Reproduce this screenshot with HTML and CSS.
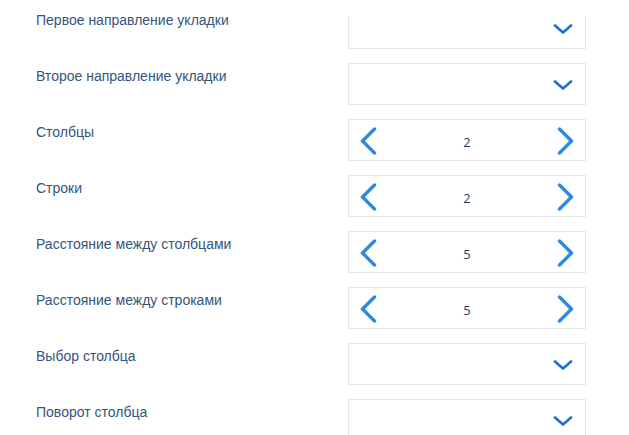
FILE: index.html
```html
<!DOCTYPE html>
<html lang="ru">
<head>
<meta charset="utf-8">
<link rel="stylesheet" href="styles.css">
</head>
<body>
<div class="form">
  <div class="row">
    <div class="label">Первое направление укладки</div>
    <div class="field select clipped">
      <svg class="chev" width="20" height="10" viewBox="0 0 20 10"><path d="M2 1.5 L10 8.5 L18 1.5"/></svg>
    </div>
  </div>
  <div class="row">
    <div class="label">Второе направление укладки</div>
    <div class="field select">
      <svg class="chev" width="20" height="10" viewBox="0 0 20 10"><path d="M2 1.5 L10 8.5 L18 1.5"/></svg>
    </div>
  </div>
  <div class="row">
    <div class="label">Столбцы</div>
    <div class="field stepper">
      <svg class="arrow" width="17" height="28" viewBox="0 0 17 28"><path d="M14.5 2 L2.5 14 L14.5 26"/></svg>
      <span class="value">2</span>
      <svg class="arrow" width="17" height="28" viewBox="0 0 17 28"><path d="M2.5 2 L14.5 14 L2.5 26"/></svg>
    </div>
  </div>
  <div class="row">
    <div class="label">Строки</div>
    <div class="field stepper">
      <svg class="arrow" width="17" height="28" viewBox="0 0 17 28"><path d="M14.5 2 L2.5 14 L14.5 26"/></svg>
      <span class="value">2</span>
      <svg class="arrow" width="17" height="28" viewBox="0 0 17 28"><path d="M2.5 2 L14.5 14 L2.5 26"/></svg>
    </div>
  </div>
  <div class="row">
    <div class="label">Расстояние между столбцами</div>
    <div class="field stepper">
      <svg class="arrow" width="17" height="28" viewBox="0 0 17 28"><path d="M14.5 2 L2.5 14 L14.5 26"/></svg>
      <span class="value">5</span>
      <svg class="arrow" width="17" height="28" viewBox="0 0 17 28"><path d="M2.5 2 L14.5 14 L2.5 26"/></svg>
    </div>
  </div>
  <div class="row">
    <div class="label">Расстояние между строками</div>
    <div class="field stepper">
      <svg class="arrow" width="17" height="28" viewBox="0 0 17 28"><path d="M14.5 2 L2.5 14 L14.5 26"/></svg>
      <span class="value">5</span>
      <svg class="arrow" width="17" height="28" viewBox="0 0 17 28"><path d="M2.5 2 L14.5 14 L2.5 26"/></svg>
    </div>
  </div>
  <div class="row">
    <div class="label">Выбор столбца</div>
    <div class="field select">
      <svg class="chev" width="20" height="10" viewBox="0 0 20 10"><path d="M2 1.5 L10 8.5 L18 1.5"/></svg>
    </div>
  </div>
  <div class="row">
    <div class="label">Поворот столбца</div>
    <div class="field select">
      <svg class="chev" width="20" height="10" viewBox="0 0 20 10"><path d="M2 1.5 L10 8.5 L18 1.5"/></svg>
    </div>
  </div>
</div>
</body>
</html>
```

FILE: styles.css
```css
html, body {
  margin: 0;
  padding: 0;
  background: #ffffff;
  overflow: hidden;
}

body {
  width: 629px;
  height: 435px;
  font-family: "Liberation Sans", Arial, sans-serif;
}

.form {
  display: flex;
  flex-direction: column;
  gap: 14px;
  padding: 7px 0 0 36px;
}

.row {
  display: grid;
  grid-template-columns: 312px 238px;
  align-items: start;
}

.label {
  font-size: 14px;
  line-height: 16px;
  color: #34557a;
  padding-top: 5px;
}

.field {
  box-sizing: border-box;
  height: 42px;
  border: 1px solid #e6e6e6;
  background: #fff;
  display: flex;
  align-items: center;
}

.clipped {
  clip-path: inset(9px 0 0 0);
}

.select {
  justify-content: flex-end;
  padding: 2px 12px 0 0;
}

.chev path {
  fill: none;
  stroke: #1e74cf;
  stroke-width: 2.7;
  stroke-linecap: round;
  stroke-linejoin: round;
}

.stepper {
  justify-content: space-between;
  padding: 1px 11px 0 11px;
}

.arrow path {
  fill: none;
  stroke: #2e8ae0;
  stroke-width: 3.4;
  stroke-linecap: round;
  stroke-linejoin: round;
}

.value {
  font-family: "Open Sans", "Noto Sans", sans-serif;
  font-size: 13px;
  color: #1f3d63;
  padding-top: 2px;
}
```
